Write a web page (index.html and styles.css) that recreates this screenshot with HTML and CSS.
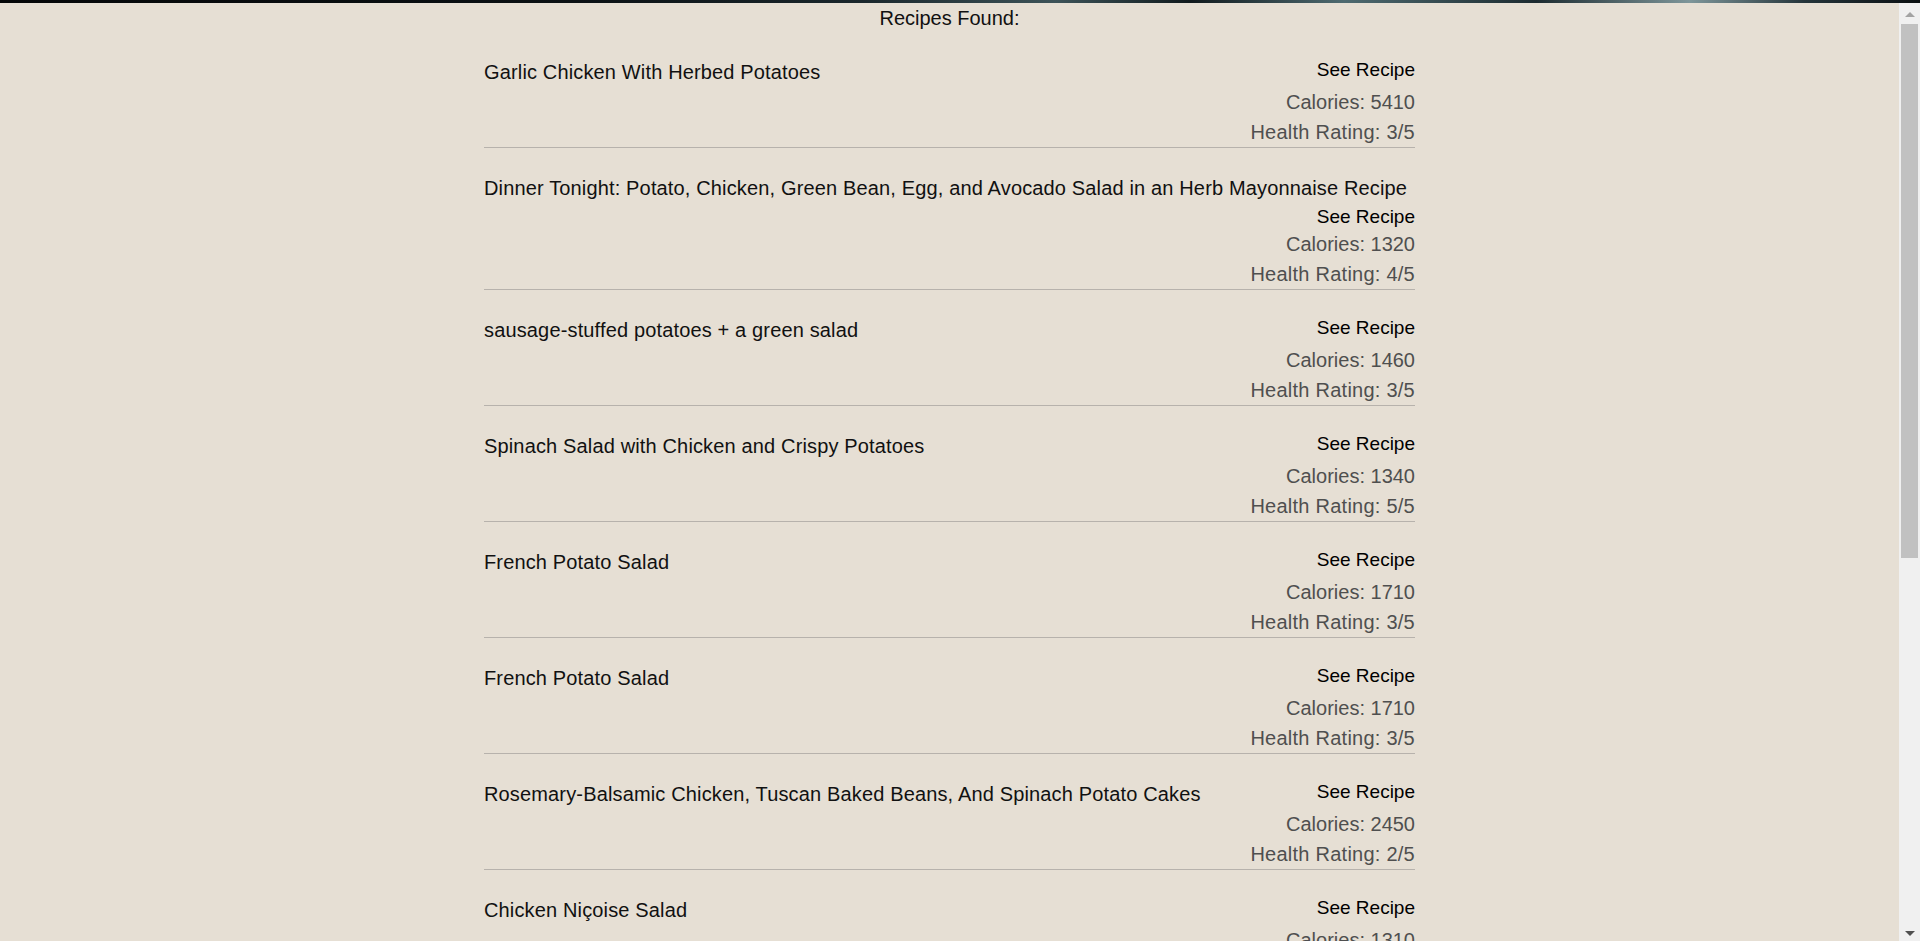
FILE: index.html
```html
<!DOCTYPE html>
<html lang="en">
<head>
<meta charset="utf-8">
<title>Recipes Found</title>
<link rel="stylesheet" href="styles.css">
</head>
<body>
<div class="top-strip"></div>
<div class="frame">
  <main class="viewport">
    <h2 class="heading">Recipes Found:</h2>
    <section class="recipes">
      <article class="recipe">
        <div class="recipe-head"><span class="recipe-title">Garlic Chicken With Herbed Potatoes</span><a class="see">See Recipe</a></div>
        <div class="meta calories">Calories: 5410</div>
        <div class="meta health">Health Rating: 3/5</div>
      </article>
      <article class="recipe">
        <div class="recipe-head"><span class="recipe-title">Dinner Tonight: Potato, Chicken, Green Bean, Egg, and Avocado Salad in an Herb Mayonnaise Recipe</span><a class="see">See Recipe</a></div>
        <div class="meta calories">Calories: 1320</div>
        <div class="meta health">Health Rating: 4/5</div>
      </article>
      <article class="recipe">
        <div class="recipe-head"><span class="recipe-title">sausage-stuffed potatoes + a green salad</span><a class="see">See Recipe</a></div>
        <div class="meta calories">Calories: 1460</div>
        <div class="meta health">Health Rating: 3/5</div>
      </article>
      <article class="recipe">
        <div class="recipe-head"><span class="recipe-title">Spinach Salad with Chicken and Crispy Potatoes</span><a class="see">See Recipe</a></div>
        <div class="meta calories">Calories: 1340</div>
        <div class="meta health">Health Rating: 5/5</div>
      </article>
      <article class="recipe">
        <div class="recipe-head"><span class="recipe-title">French Potato Salad</span><a class="see">See Recipe</a></div>
        <div class="meta calories">Calories: 1710</div>
        <div class="meta health">Health Rating: 3/5</div>
      </article>
      <article class="recipe">
        <div class="recipe-head"><span class="recipe-title">French Potato Salad</span><a class="see">See Recipe</a></div>
        <div class="meta calories">Calories: 1710</div>
        <div class="meta health">Health Rating: 3/5</div>
      </article>
      <article class="recipe">
        <div class="recipe-head"><span class="recipe-title">Rosemary-Balsamic Chicken, Tuscan Baked Beans, And Spinach Potato Cakes</span><a class="see">See Recipe</a></div>
        <div class="meta calories">Calories: 2450</div>
        <div class="meta health">Health Rating: 2/5</div>
      </article>
      <article class="recipe">
        <div class="recipe-head"><span class="recipe-title">Chicken Niçoise Salad</span><a class="see">See Recipe</a></div>
        <div class="meta calories">Calories: 1310</div>
        <div class="meta health">Health Rating: 4/5</div>
      </article>
    </section>
  </main>
  <div class="scrollbar">
    <div class="arrow-up"></div>
    <div class="thumb"></div>
    <div class="track-rest"></div>
    <div class="arrow-down"></div>
  </div>
</div>
</body>
</html>
```
FILE: styles.css
```css
html, body {
  margin: 0;
  padding: 0;
  height: 100%;
  overflow: hidden;
  background: #e6dfd4;
}

body {
  display: flex;
  flex-direction: column;
  font-family: "Liberation Sans", Arial, sans-serif;
}

.top-strip {
  height: 3px;
  flex: none;
  background: linear-gradient(90deg, #050708 0%, #0b1114 30%, #1a272c 45%, #3d5358 55%, #101a1d 62%, #4e6a70 70%, #1c2b30 80%, #7e969a 88%, #24343a 94%, #0a0f11 100%);
}

.frame {
  flex: 1;
  display: flex;
  min-height: 0;
}

.viewport {
  flex: 1;
  overflow: hidden;
  padding-top: 4px;
}

.heading {
  margin: 0;
  font-weight: normal;
  font-size: 20px;
  line-height: 23px;
  text-align: center;
  color: #111;
}

.recipes {
  width: 931px;
  margin: 2px auto 0;
}

.recipe {
  padding: 25px 0 3px;
  border-bottom: 1px solid #b7b2ac;
}

.recipe-head {
  display: flex;
  flex-wrap: wrap;
  align-items: flex-start;
  justify-content: space-between;
}

.recipe-title {
  padding: 3px 0 4px;
  font-size: 20px;
  line-height: 24px;
  letter-spacing: 0.15px;
  color: #111;
  white-space: nowrap;
}

.see {
  margin-left: auto;
  font-size: 19px;
  line-height: 26px;
  color: #000;
  cursor: pointer;
}

.meta {
  text-align: right;
  font-size: 20px;
  line-height: 24px;
  color: #4f4f4f;
}

.calories {
  margin-top: 2px;
}

.health {
  margin-top: 6px;
  letter-spacing: 0.25px;
}

.scrollbar {
  width: 21px;
  flex: none;
  background: #f0f0f0;
  display: flex;
  flex-direction: column;
  align-items: center;
}

.arrow-up {
  margin-top: 9px;
  width: 0;
  height: 0;
  border-left: 5px solid transparent;
  border-right: 5px solid transparent;
  border-bottom: 5px solid #a3a3a3;
}

.thumb {
  margin-top: 7px;
  width: 17px;
  height: 534px;
  background: #c1c1c1;
}

.track-rest {
  flex: 1;
}

.arrow-down {
  margin-bottom: 5px;
  width: 0;
  height: 0;
  border-left: 5px solid transparent;
  border-right: 5px solid transparent;
  border-top: 5px solid #505050;
}
```
